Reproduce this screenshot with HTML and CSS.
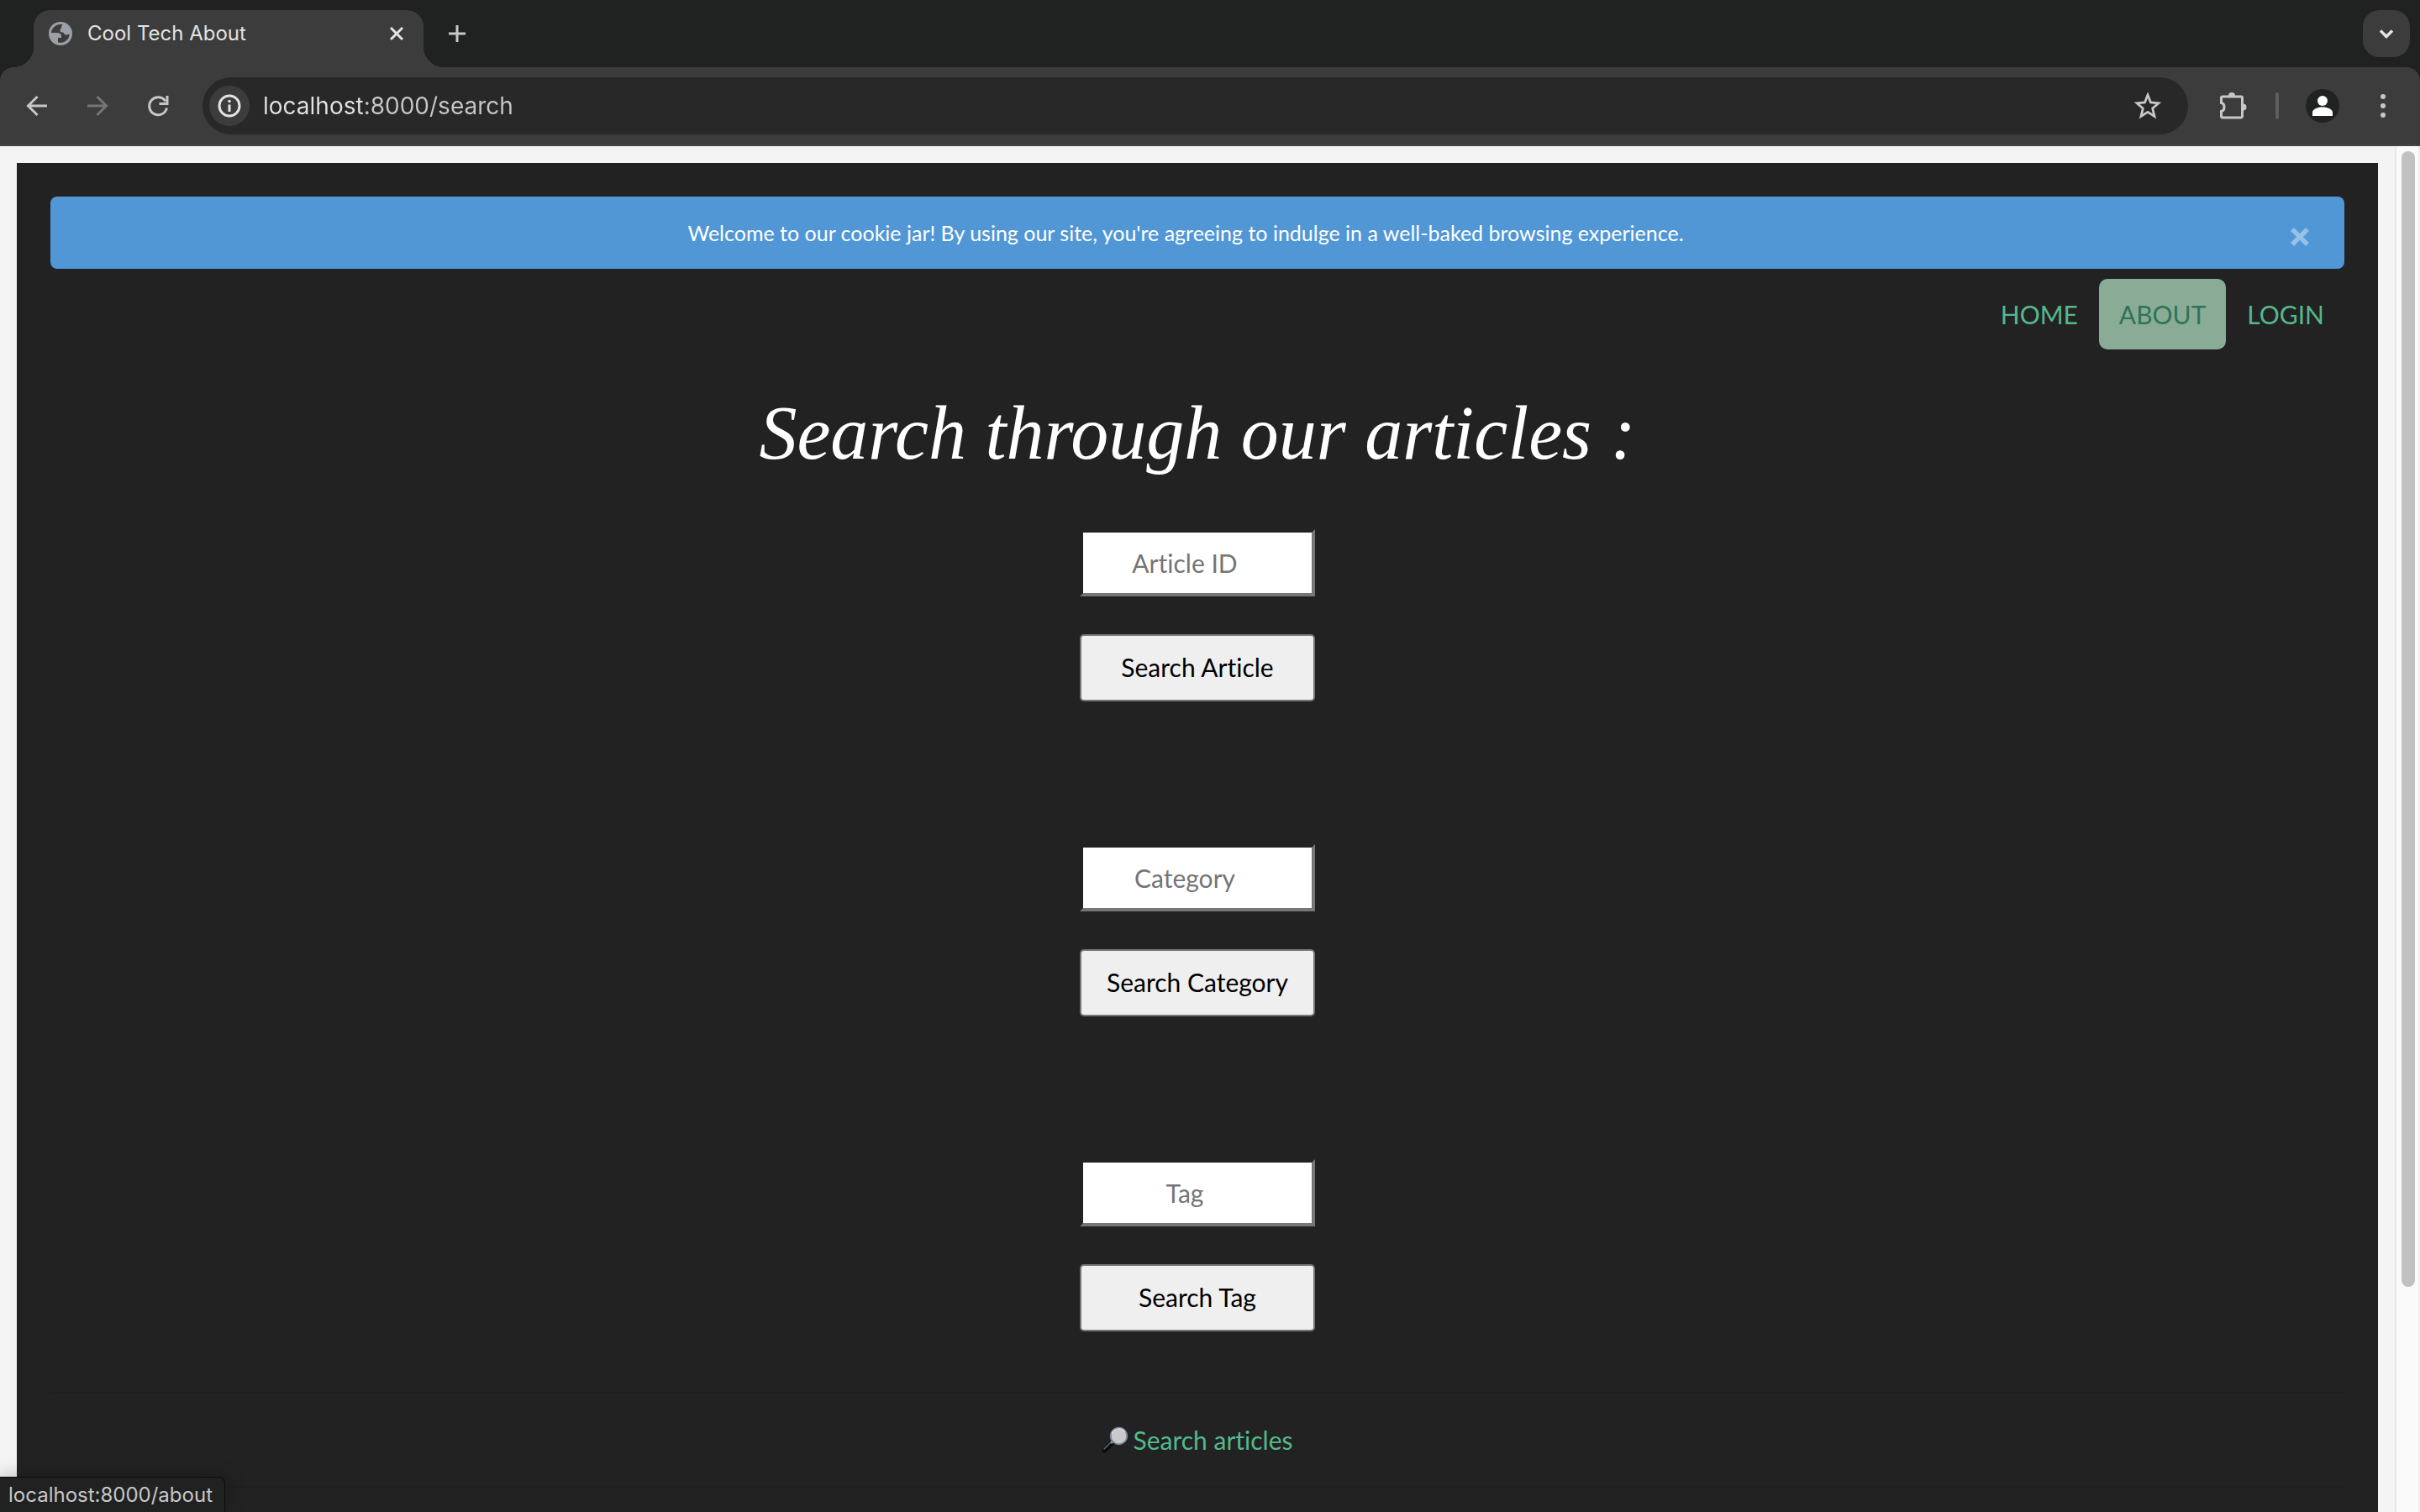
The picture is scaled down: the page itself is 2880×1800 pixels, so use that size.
FILE: index.html
```html
<!DOCTYPE html>
<html lang="en">
<head>
<meta charset="utf-8">
<title>Cool Tech About</title>
<link rel="stylesheet" href="styles.css">
</head>
<body>
<div class="tabstrip">
  <div class="tab">
    <svg class="icon icon-globe" viewBox="0 0 28 28"><circle cx="14" cy="14" r="14" fill="#9aa0a6"/><path d="M14 3C8 3 3.500 7.500 3 13h7c3 0 5 1.500 5 4v2h-4v5.500c6 1.500 13-2 13.700-9.500h-1.700c-1 0-1.500.5-2.500.5-1.500 0-2-1.500-3-2.500-1.500-1-4-.5-4-2.500 0-2 1.500-2.500 1.500-4 0-1 .5-2 1.500-3C16 3.100 15 3 14 3z" fill="#3c3c3c"/></svg>
    <span class="tab-title">Cool Tech About</span>
    <button class="icon-button" aria-label="Close tab"><svg class="icon" viewBox="0 0 28 28"><path d="M7 7l14 14M21 7l-14 14" stroke="#e3e3e3" stroke-width="3"/></svg></button>
  </div>
  <button class="icon-button new-tab" aria-label="New tab"><svg class="icon" viewBox="0 0 28 28"><path d="M14 4v20M4 14h20" stroke="#c7c7c7" stroke-width="3"/></svg></button>
  <button class="tab-search" aria-label="Search tabs"><svg class="icon" viewBox="0 0 28 28"><path d="M7 10.500l7 7 7-7" fill="none" stroke="#e3e3e3" stroke-width="3.500"/></svg></button>
</div>
<div class="toolbar">
  <div class="history">
    <button class="icon-button" aria-label="Back"><svg class="icon" viewBox="0 0 28 28"><path d="M26 14H4M14.500 3L3.500 14l11 11" fill="none" stroke="#c7c7c7" stroke-width="3"/></svg></button>
    <button class="icon-button" aria-label="Forward"><svg class="icon" viewBox="0 0 28 28"><path d="M2 14h22M13.500 3l11 11-11 11" fill="none" stroke="#777" stroke-width="3"/></svg></button>
    <button class="icon-button" aria-label="Reload"><svg class="icon" viewBox="0 0 28 28"><path d="M24.500 16.500A10.500 10.500 0 1 1 23 8.500" fill="none" stroke="#c7c7c7" stroke-width="3"/><path d="M25 2v9.500h-9.500" fill="none" stroke="#c7c7c7" stroke-width="3"/></svg></button>
  </div>
  <div class="omnibox">
    <button class="site-info" aria-label="View site information"><svg class="icon" viewBox="0 0 28 28"><circle cx="14" cy="14" r="12" fill="none" stroke="#e3e3e3" stroke-width="3"/><circle cx="14" cy="8.500" r="1.800" fill="#e3e3e3"/><path d="M14 12.500v8.500" stroke="#e3e3e3" stroke-width="3"/></svg></button>
    <input class="address" type="text" aria-label="Address" value="localhost:8000/search">
    <button class="icon-button" aria-label="Bookmark"><svg class="icon icon-star" viewBox="0 0 32 32"><path d="M16 3l3.500 9 9.500.8-7.300 6.200 2.300 9.500-8-5.100-8 5.100 2.300-9.500L3 12.800l9.500-.8z" fill="none" stroke="#c7c7c7" stroke-width="2.800"/></svg></button>
  </div>
  <div class="actions">
    <button class="icon-button" aria-label="Extensions"><svg class="icon icon-puzzle" viewBox="0 0 34 34"><path d="M3.500 7.500a1.500 1.500 0 0 1 1.500-1.500h22a1.500 1.500 0 0 1 1.500 1.500v22a1.500 1.500 0 0 1-1.500 1.500H5a1.500 1.500 0 0 1-1.500-1.500v-6c2.500-.5 3.500-2 3.500-5s-1-4.500-3.500-5z" fill="none" stroke="#c7c7c7" stroke-width="3"/><path d="M12 5a4 4 0 0 1 8 0zM29.500 14.500a4 4 0 0 1 0 8z" fill="#c7c7c7"/></svg></button>
    <span class="divider"></span>
    <button class="icon-button" aria-label="Profile"><svg class="icon icon-avatar" viewBox="0 0 40 40"><circle cx="20" cy="20" r="20" fill="#202221"/><circle cx="20" cy="14" r="6" fill="#fff"/><path d="M8 32v-4c0-4 6-6.500 12-6.500s12 2.500 12 6.500v4z" fill="#fff"/></svg></button>
    <button class="icon-button menu" aria-label="Menu"><svg class="icon" viewBox="0 0 28 28"><g fill="#c7c7c7"><circle cx="14" cy="3" r="3"/><circle cx="14" cy="14" r="3"/><circle cx="14" cy="25" r="3"/></g></svg></button>
  </div>
</div>
<div class="viewport">
  <main class="page">
    <div class="alert">
      <p class="alert-text">Welcome to our cookie jar! By using our site, you're agreeing to indulge in a well-baked browsing experience.</p>
      <button class="icon-button" aria-label="Dismiss"><svg class="icon" viewBox="0 0 28 28"><path d="M5 5l18 18M23 5L5 23" stroke="#97c1e7" stroke-width="5.500"/></svg></button>
    </div>
    <nav class="nav">
      <a class="nav-link" href="#home">HOME</a>
      <a class="nav-link nav-link-hover" href="#about">ABOUT</a>
      <a class="nav-link" href="#login">LOGIN</a>
    </nav>
    <h1 class="heading">Search through our articles :</h1>
    <div class="searches">
      <form class="search">
        <input class="field" type="text" aria-label="Article ID" placeholder="Article ID">
        <button class="submit" type="submit">Search Article</button>
      </form>
      <form class="search">
        <input class="field" type="text" aria-label="Category" placeholder="Category">
        <button class="submit" type="submit">Search Category</button>
      </form>
      <form class="search">
        <input class="field" type="text" aria-label="Tag" placeholder="Tag">
        <button class="submit" type="submit">Search Tag</button>
      </form>
    </div>
    <footer class="footer">
      <a class="footer-link" href="#search"><svg class="icon icon-lens" viewBox="0 0 32 32"><path d="M3.500 28.500L11.500 20.500" stroke="#0b0b0c" stroke-width="6" stroke-linecap="round"/><path d="M3 27L10.500 19.500" stroke="#66696c" stroke-width="1.500" stroke-linecap="round"/><path d="M11 20l3-3" stroke="#8b9096" stroke-width="3"/><circle cx="20.500" cy="11.500" r="9.800" fill="#c9c9ca" stroke="#75869a" stroke-width="1.800"/><path d="M12 9a9 9 0 0 1 16-2" fill="none" stroke="#d9e0e8" stroke-width="1.200"/></svg>Search articles</a>
    </footer>
  </main>
  <div class="scrollbar"><div class="thumb"></div></div>
</div>
<div class="status">localhost:8000/about</div>
</body>
</html>
```
FILE: styles.css
```css
* { box-sizing: border-box; }

body {
  margin: 0;
  height: 100vh;
  display: flex;
  flex-direction: column;
  overflow: hidden;
  position: relative;
  background: #202221;
  font-family: Lato, "Liberation Sans", sans-serif;
  font-size: 30px;
  font-variant-ligatures: none;
}

button, input { font-family: inherit; font-size: inherit; font-variant-ligatures: none; }
a { text-decoration: none; }

.icon { display: block; width: 28px; height: 28px; flex: none; }
.icon-star, .icon-lens { width: 32px; height: 32px; }
.icon-puzzle { width: 34px; height: 34px; }
.icon-avatar { width: 40px; height: 40px; }
.icon-button { display: flex; padding: 0; border: 0; background: none; }

/* Browser frame */
.tabstrip {
  display: flex;
  align-items: center;
  flex: none;
  height: 80px;
  padding: 12px 12px 0 40px;
}
.tab {
  position: relative;
  display: flex;
  align-items: center;
  width: 464px;
  height: 68px;
  padding: 0 18px 12px;
  background: #3c3c3c;
  border-radius: 20px 20px 0 0;
  font: 24px/32px Inter, sans-serif;
  color: #e3e3e3;
}
.tab::before, .tab::after {
  content: "";
  position: absolute;
  bottom: 0;
  width: 24px;
  height: 24px;
}
.tab::before { right: 100%; background: radial-gradient(circle at 0 0, transparent 24px, #3c3c3c 24px); }
.tab::after { left: 100%; background: radial-gradient(circle at 100% 0, transparent 24px, #3c3c3c 24px); }
.tab-title { flex: 1; margin-left: 18px; }
.new-tab { margin: 0 auto 12px 26px; }
.tab-search {
  display: flex;
  align-items: center;
  justify-content: center;
  width: 56px;
  height: 56px;
  margin-bottom: 12px;
  padding: 0;
  border: 0;
  border-radius: 20px;
  background: #3c3c3c;
}
.toolbar {
  display: flex;
  align-items: center;
  flex: none;
  height: 94px;
  padding: 0 30px;
  background: #3c3c3c;
  border-bottom: 2px solid #464446;
  border-radius: 16px 16px 0 0;
}
.history { display: flex; gap: 44px; margin-right: 39px; }
.omnibox {
  display: flex;
  align-items: center;
  flex: 1;
  height: 68px;
  padding: 0 32px 0 8px;
  border-radius: 34px;
  background: #282828;
}
.site-info {
  display: flex;
  align-items: center;
  justify-content: center;
  width: 48px;
  height: 48px;
  padding: 0;
  border: 0;
  border-radius: 50%;
  background: #3c3c3c;
}
.address {
  flex: 1;
  min-width: 0;
  margin-left: 16px;
  padding: 0;
  border: 0;
  outline: 0;
  background: linear-gradient(90deg, #e3e3e3 122px, #c7c7c7 122px);
  background-clip: text;
  -webkit-background-clip: text;
  -webkit-text-fill-color: transparent;
  font: 28px/40px Inter, sans-serif;
}
.actions { display: flex; align-items: center; margin-left: 36px; }
.divider { width: 4px; height: 32px; margin: 0 32px 0 34px; border-radius: 2px; background: #5e5e5e; }
.menu { margin-left: 38px; }

/* Web page */
.viewport { display: flex; flex: 1; min-height: 0; background: #f4f4f4; }
.page {
  flex: 1;
  margin: 20px 20px 0;
  padding: 40px 40px 0;
  background: #222;
  color: #fff;
}
.alert {
  display: flex;
  align-items: center;
  height: 86px;
  padding: 0 39px;
  border-radius: 8px;
  background: #5197d6;
}
.alert .icon-button { margin-top: 10px; }
.alert-text { flex: 1; margin: 0; font-size: 25px; line-height: 40px; text-align: center; }
.nav { display: flex; justify-content: flex-end; gap: 1px; margin-top: 12px; }
.nav-link { padding: 18px 24px; border-radius: 10px; color: #54b88c; line-height: 48px; }
.nav-link-hover { background: #8aac97; color: #2f7358; }
.heading {
  margin: 40px 0 0;
  font: italic 90px/120px "Apple Chancery", "Liberation Serif", serif;
  text-align: center;
}
.searches { display: flex; flex-direction: column; align-items: center; gap: 170px; margin-top: 54px; }
.search { display: flex; flex-direction: column; gap: 45px; width: 280px; }
.field {
  width: 100%;
  height: 80px;
  padding: 0 30px 0 0;
  border: 4px solid;
  border-color: #222 #767676 #767676 #222;
  background: #fff;
  color: #000;
  text-align: center;
}
.field::placeholder { color: #757575; }
.submit {
  width: 100%;
  height: 80px;
  padding: 0 0 2px;
  border: 2px solid #767676;
  border-radius: 5px;
  background: #efefef;
  color: #000;
}
.footer {
  display: flex;
  align-items: center;
  justify-content: center;
  height: 114px;
  margin-top: 72px;
  border: solid #1f1f1f;
  border-width: 2px 0;
}
.footer-link { display: flex; align-items: center; gap: 5px; color: #54b88c; line-height: 48px; }
.scrollbar { flex: none; width: 30px; padding: 6px 4px 0 6px; border-left: 2px solid #e8e8e8; border-right: 2px solid #eee; background: #fafafa; }
.thumb { width: 16px; height: calc(100% - 268px); border-radius: 8px; background: #c1c1c1; }

.status {
  position: absolute;
  left: 0;
  bottom: 0;
  padding: 1px 14px 0 10px;
  border: solid #0c0c0c;
  border-width: 1px 1px 0 0;
  border-radius: 0 8px 0 0;
  background: #202221;
  box-shadow: 0 0 24px rgba(0, 0, 0, .25);
  color: #c7c7c7;
  font: 24px/40px Inter, sans-serif;
}
```
